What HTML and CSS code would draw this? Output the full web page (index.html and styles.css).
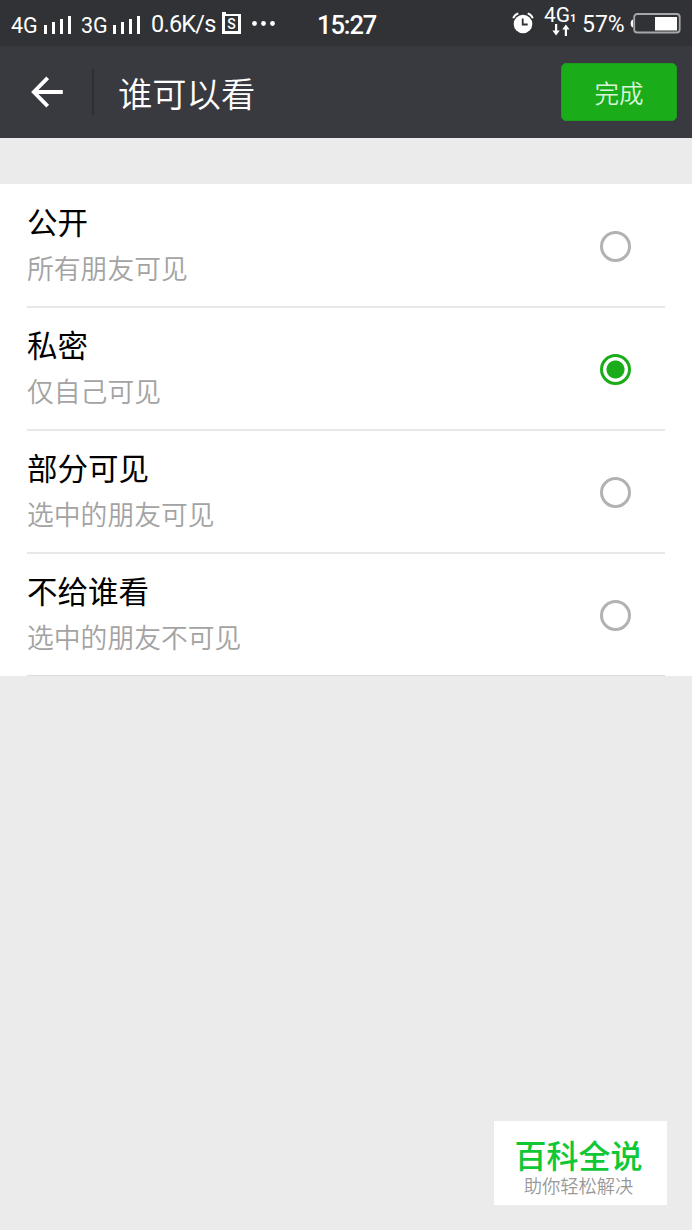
FILE: index.html
```html
<!DOCTYPE html>
<html lang="zh-CN">
<head>
  <meta charset="UTF-8" />
  <meta name="viewport" content="width=device-width, initial-scale=1" />
  <title>谁可以看</title>
  <link rel="stylesheet" href="styles.css">
</head>

<body>

<div class="status-bar">
  <span class="net net-4g">4G</span>
  <svg class="signal" width="27" height="18" viewBox="0 0 27 18" fill="#fff">
    <path d="M0 9h3v9H0zM8 6h3v12H8zM16 3h3v15h-3zM24 0h3v18h-3z"/>
  </svg>
  <span class="net net-3g">3G</span>
  <svg class="signal" width="27" height="18" viewBox="0 0 27 18" fill="#fff">
    <path d="M0 9h3v9H0zM8 6h3v12H8zM16 3h3v15h-3zM24 0h3v18h-3z"/>
  </svg>
  <span class="speed">0.6K/s</span>
  <span class="sim">S</span>
  <svg class="more" width="23" height="5" viewBox="0 0 23 5" fill="#fff">
    <circle cx="2.5" cy="2.5" r="2.4"/>
    <circle cx="11.5" cy="2.5" r="2.4"/>
    <circle cx="20.5" cy="2.5" r="2.4"/>
  </svg>
  <span class="clock">15:27</span>
  <svg class="alarm" width="22" height="22" viewBox="0 0 22 22" fill="none">
    <circle cx="11" cy="12" r="9.3" fill="#fff"/>
    <path d="M1.2 6.3C2 4 3.8 2.2 6.3 1.4M20.8 6.3C20 4 18.2 2.2 15.7 1.4" stroke="#fff" stroke-width="1.8"/>
    <path d="M10.7 6.5v6h5" stroke="#313236" stroke-width="1.8"/>
  </svg>
  <div class="data">
    <span class="data-label">4G<small>1</small></span>
    <svg class="data-arrows" width="18" height="12" viewBox="0 0 18 12" fill="#fff">
      <path d="M3 0h2.2v6.5h2.6L4.1 11.5.4 6.5H3zM12.8 12H15V5.5h2.6L13.9.5l-3.7 5h2.6z"/>
    </svg>
  </div>
  <span class="percent">57%</span>
  <svg class="battery" width="51" height="21" viewBox="0 0 51 21" fill="none">
    <path d="M3 6.5v8Q.7 14 .7 10.5T3 6.5z" fill="#fff"/>
    <rect x="4.2" y="1" width="45.5" height="18.5" rx="3" stroke="#a6a7a9" stroke-width="1.8"/>
    <rect x="25" y="4" width="22" height="13.5" fill="#fff"/>
  </svg>
</div>

<header class="nav">
  <svg class="back" width="32" height="32" viewBox="0 0 32 32" fill="none" stroke="#fff" stroke-width="3.8">
    <path d="M16.7 1.8L2.8 16l13.9 14.2M3 16h28.8"/>
  </svg>
  <div class="divider"></div>
  <h1>谁可以看</h1>
  <button class="done">完成</button>
</header>

<div class="options">
  <div class="option">
    <div class="option-text">
      <div class="option-title">公开</div>
      <div class="option-desc">所有朋友可见</div>
    </div>
    <span class="radio"></span>
  </div>
  <div class="option">
    <div class="option-text">
      <div class="option-title">私密</div>
      <div class="option-desc">仅自己可见</div>
    </div>
    <span class="radio checked"></span>
  </div>
  <div class="option">
    <div class="option-text">
      <div class="option-title">部分可见</div>
      <div class="option-desc">选中的朋友可见</div>
    </div>
    <span class="radio"></span>
  </div>
  <div class="option">
    <div class="option-text">
      <div class="option-title">不给谁看</div>
      <div class="option-desc">选中的朋友不可见</div>
    </div>
    <span class="radio"></span>
  </div>
</div>

<div class="brand">
  <div class="brand-name">百科全说</div>
  <div class="brand-slogan">助你轻松解决</div>
</div>

</body>
</html>
```
FILE: styles.css
```css
* {
  box-sizing: border-box;
}

body {
  display: flex;
  flex-direction: column;
  height: 1230px;
  margin: 0;
  background: #ebebeb;
  font-family: "Noto Sans CJK SC", sans-serif;
  overflow: hidden;
}

.status-bar {
  display: flex;
  align-items: center;
  height: 46px;
  padding-left: 11px;
  background: #313236;
  color: #fff;
  font-family: Roboto, sans-serif;
  line-height: 46px;
  white-space: nowrap;
}

.status-bar > * {
  flex: none;
}

.net {
  width: 33px;
  font-size: 21.5px;
  padding-top: 6px;
}

.net-3g {
  width: 32px;
  margin-left: 10px;
}

.signal {
  margin-top: 4px;
}

.speed {
  width: 71px;
  margin-left: 11px;
  font-size: 23.5px;
  letter-spacing: -0.75px;
  padding-top: 2px;
}

.sim {
  position: relative;
  width: 19px;
  height: 20px;
  margin-top: 2px;
  border: 3px solid #fff;
  border-width: 2px 3px 3px;
  font-size: 14px;
  font-weight: 500;
  line-height: 16px;
  text-align: center;
}

/* small tab on the corner of the card */
.sim::before {
  content: "";
  position: absolute;
  top: -4px;
  left: -3px;
  width: 4px;
  height: 4px;
  background: #fff;
}

.more {
  margin-left: 11px;
}

.clock {
  width: 62px;
  margin-left: 42px;
  font-size: 25.5px;
  font-weight: 500;
  letter-spacing: -1.1px;
  padding-top: 3px;
}

.alarm {
  margin-left: 133px;
}

.data {
  width: 34px;
  height: 36px;
  margin-left: 10px;
}

.data-label {
  display: block;
  height: 19px;
  font-size: 21px;
  line-height: 21px;
}

.data-label small {
  font-size: 11px;
  font-weight: bold;
}

.data-arrows {
  display: block;
  margin-left: 8px;
}

.percent {
  width: 48px;
  margin-left: 4px;
  font-size: 23px;
  padding-top: 3px;
}

.nav {
  display: flex;
  align-items: center;
  flex: none;
  height: 92px;
  padding: 0 15px 0 31px;
  background: #393a3f;
  color: #fff;
}

.divider {
  width: 2px;
  height: 46px;
  margin-left: 29px;
  background: #2e2f33;
}

.nav h1 {
  flex: 1;
  margin: 0 0 0 24px;
  font-size: 34.3px;
  font-weight: 350;
  line-height: 50px;
}

.done {
  width: 116px;
  height: 58px;
  padding: 0;
  border: 1px solid #1e9b1f;
  border-radius: 5px;
  background: #1aad19;
  color: #d9f5d9;
  font-family: inherit;
  font-size: 24.5px;
  font-weight: 350;
}

.options {
  margin-top: 46px;
  padding: 1px 27px 0;
  background: #fff;
}

.option {
  display: flex;
  align-items: center;
  justify-content: space-between;
  height: 123px;
  padding-right: 34px;
  border-bottom: 2px solid #e8e8e8;
}

.option:last-child {
  height: 122px;
  border-bottom: 1px solid #dcdcdc;
}

.option-title {
  color: #000;
  font-size: 30.5px;
  line-height: 45px;
}

.option-desc {
  color: #a3a3a3;
  font-size: 26.8px;
  font-weight: 350;
  line-height: 48px;
}

.radio {
  width: 31px;
  height: 31px;
  margin-top: 1px;
  border: 3px solid #b2b2b2;
  border-radius: 50%;
}

.radio.checked {
  border-color: #1aad19;
  background: radial-gradient(circle, #1aad19 8.5px, #fff 9.5px);
}

.brand {
  width: 173px;
  height: 84px;
  margin: auto 25px 25px auto;
  padding: 10px 4px 0 0;
  background: #fff;
  text-align: center;
}

.brand-name {
  color: #10c836;
  font-size: 32px;
  font-weight: 500;
  line-height: 46px;
}

.brand-slogan {
  color: #999;
  font-size: 18.3px;
  font-weight: 350;
  line-height: 27px;
  margin-top: -5px;
}
```
